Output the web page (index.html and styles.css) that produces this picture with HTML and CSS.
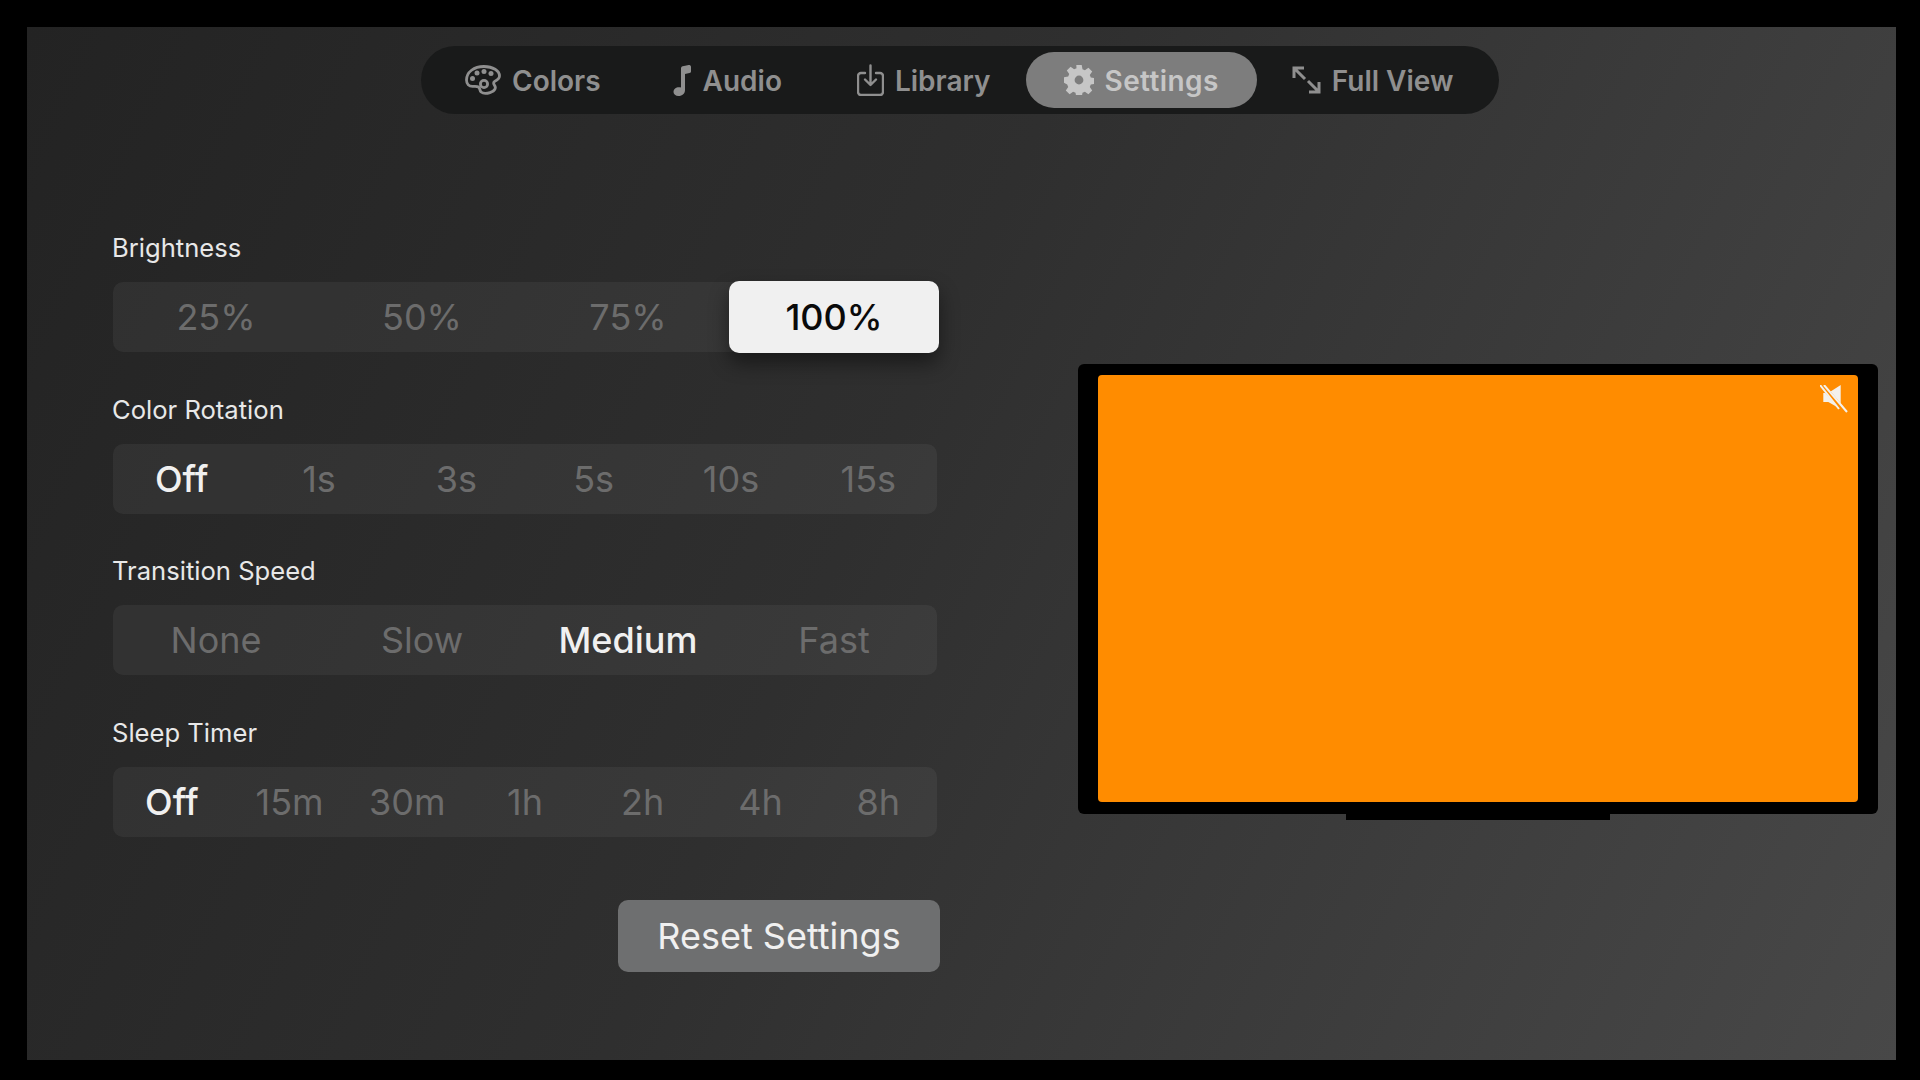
FILE: index.html
```html
<!DOCTYPE html>
<html>
<head>
    <link rel="stylesheet" href="styles.css">
</head>
<body>
    <div class="screen">
        <div class="tab-bar">
            <div class="tab">
                <svg class="tab-icon" width="36" height="30" viewBox="0 0 36 30" fill="none" stroke="currentColor" stroke-width="2.800">
                    <path d="M19 1.500C9 1.500 1.500 7 1.500 15c0 4 2.600 6.400 6 6.400 2.600 0 4.600-.4 6 .6 1.800 1.300 1 3.600 2.600 5 1.800 1.500 5.400 1.700 8.900.6 5.500-1.700 6.200-5 4.500-7.300-1.200-1.700-1.300-3.100.4-4 2.500-1.300 4.600-2.600 4.600-5.300C34.500 5.600 28 1.500 19 1.500z"/>
                    <circle cx="19" cy="19" r="3.600"/>
                    <g fill="currentColor" stroke="none">
                        <circle cx="7.500" cy="13.500" r="2.500"/>
                        <circle cx="12" cy="8" r="2.500"/>
                        <circle cx="19" cy="6.500" r="2.500"/>
                        <circle cx="26" cy="8.500" r="2.500"/>
                    </g>
                </svg>
                <span>Colors</span>
            </div>
            <div class="tab tab-audio">
                <svg class="tab-icon" width="20" height="31" viewBox="0 0 20 31" fill="currentColor">
                    <path d="M9 3.500c0-1.200.6-1.900 1.700-2.200l6-1.300C18 -.2 19 .6 19 2v4.200c0 1-.5 1.600-1.500 1.800l-4.500 1v16c0 3.500-2.700 6-6.500 6C3.500 31 1.500 29.300 1.500 27c0-2.800 2.400-4.700 5.500-4.700.8 0 1.500.1 2 .3z"/>
                </svg>
                <span>Audio</span>
            </div>
            <div class="tab">
                <svg class="tab-icon" width="27" height="32" viewBox="0 0 27 32" fill="none" stroke="currentColor" stroke-width="2.400" stroke-linecap="round" stroke-linejoin="round">
                    <path d="M8 9H4a3 3 0 0 0-3 3v16a3 3 0 0 0 3 3h19a3 3 0 0 0 3-3V12a3 3 0 0 0-3-3h-4"/>
                    <path d="M13.500 1.500v19M8 15.500l5.500 5.500 5.500-5.500"/>
                </svg>
                <span>Library</span>
            </div>
            <div class="tab active">
                <svg class="tab-icon" width="30" height="30" viewBox="0 0 30 30" fill="currentColor">
                    <path fill-rule="evenodd" d="M12.300 0h5.400l.8 4.200 2.400 1 3.500-2.400 3.800 3.800-2.400 3.500 1 2.400 4.200.8v5.400l-4.200.8-1 2.400 2.400 3.500-3.800 3.800-3.500-2.400-2.400 1-.8 4.200h-5.400l-.8-4.200-2.400-1-3.500 2.400-3.800-3.800 2.400-3.500-1-2.400L0 17.700v-5.400l4.200-.8 1-2.400-2.400-3.500 3.800-3.800 3.500 2.400 2.400-1zM15 10.600a4.400 4.400 0 1 0 0 8.800 4.400 4.400 0 0 0 0-8.800z"/>
                </svg>
                <span>Settings</span>
            </div>
            <div class="tab">
                <svg class="tab-icon" width="29" height="28" viewBox="0 0 29 28" fill="none" stroke="currentColor" stroke-width="3">
                    <path d="M2 12V2h10M2 2l11 11M27 16v10H17M27 26L16 15"/>
                </svg>
                <span>Full View</span>
            </div>
        </div>

        <div class="main">
            <div class="settings">
                <div class="group">
                    <div class="group-label">Brightness</div>
                    <div class="segments">
                        <div class="segment">25%</div>
                        <div class="segment">50%</div>
                        <div class="segment">75%</div>
                        <div class="segment selected">100%</div>
                    </div>
                </div>
                <div class="group">
                    <div class="group-label">Color Rotation</div>
                    <div class="segments">
                        <div class="segment on">Off</div>
                        <div class="segment">1s</div>
                        <div class="segment">3s</div>
                        <div class="segment">5s</div>
                        <div class="segment">10s</div>
                        <div class="segment">15s</div>
                    </div>
                </div>
                <div class="group">
                    <div class="group-label">Transition Speed</div>
                    <div class="segments">
                        <div class="segment">None</div>
                        <div class="segment">Slow</div>
                        <div class="segment on">Medium</div>
                        <div class="segment">Fast</div>
                    </div>
                </div>
                <div class="group">
                    <div class="group-label">Sleep Timer</div>
                    <div class="segments">
                        <div class="segment on">Off</div>
                        <div class="segment">15m</div>
                        <div class="segment">30m</div>
                        <div class="segment">1h</div>
                        <div class="segment">2h</div>
                        <div class="segment">4h</div>
                        <div class="segment">8h</div>
                    </div>
                </div>
                <button class="reset-btn">Reset Settings</button>
            </div>

            <div class="preview">
                <div class="tv-frame">
                    <div class="tv-picture">
                        <svg class="mute-icon" width="28" height="28" viewBox="0 0 28 28">
                            <path fill="#f4f1ec" d="M3.300 8h5L20.700 0v24L8.300 17h-5z"/>
                            <path stroke="#ff8c00" stroke-width="5" d="M1 -1l23 27"/>
                            <path stroke="#f4f1ec" stroke-width="2" d="M0 0l19 24M4 0l23 27"/>
                        </svg>
                    </div>
                </div>
                <div class="tv-stand"></div>
            </div>
        </div>
    </div>
</body>
</html>
```

FILE: styles.css
```css
html, body {
    margin: 0;
    height: 100%;
    background-color: #000;
    overflow: hidden;
}
body {
    font-family: 'Inter', 'Liberation Sans', sans-serif;
    padding: 27px 24px 20px 27px;
    box-sizing: border-box;
}
.screen {
    height: 100%;
    padding: 19px 18px 0 86px;
    box-sizing: border-box;
    background: linear-gradient(115deg, #232323 0%, #2f2f2f 45%, #484848 100%);
}
.tab-bar {
    width: 1078px;
    height: 68px;
    margin-left: 308px;
    padding: 6px 9px;
    box-sizing: border-box;
    display: flex;
    border-radius: 34px;
    background-color: #191a1a;
}
.tab {
    display: flex;
    align-items: center;
    gap: 11px;
    margin-left: -3px;
    padding: 0 38px;
    border-radius: 28px;
    font-size: 28px;
    font-weight: 600;
    white-space: nowrap;
    color: #8f8f8f;
}
.tab span {
    margin-top: 1px;
}
.tab.active {
    background-color: #7d7d7d;
    color: #c6c6c6;
    letter-spacing: 0.4px;
}
.tab-audio {
    margin-left: -5px;
    margin-right: 2px;
}
.tab-icon {
    flex-shrink: 0;
}
.main {
    display: flex;
    justify-content: space-between;
    margin-top: 118px;
}
.settings {
    width: 827px;
    display: flex;
    flex-direction: column;
}
.group {
    margin-bottom: 41.600px;
}
.group-label {
    height: 32px;
    line-height: 32px;
    margin-bottom: 18px;
    margin-left: -1px;
    font-size: 25.600px;
    font-weight: 400;
    color: #e8e8e8;
}
.segments {
    width: 824px;
    height: 70px;
    display: flex;
    border-radius: 10px;
    background-color: rgba(255,255,255,0.05);
}
.segment {
    flex: 1;
    display: flex;
    align-items: center;
    justify-content: center;
    font-size: 36px;
    color: #6c6c6c;
}
.segment.on {
    font-weight: 500;
    color: #f0f0f0;
}
.segment.selected {
    flex: none;
    width: 210px;
    margin: -1px -2px;
    border-radius: 10px;
    background-color: #f0f0f0;
    color: #0a0a0a;
    font-weight: 500;
    box-shadow: 0 10px 20px rgba(0,0,0,0.45);
}
.reset-btn {
    align-self: flex-end;
    width: 322px;
    height: 72px;
    margin-top: 21.400px;
    border: none;
    border-radius: 10px;
    background-color: #6e6f70;
    font-family: inherit;
    font-size: 36px;
    font-weight: 400;
    color: #f0f0f0;
}
.preview {
    width: 800px;
    margin-top: 132px;
}
.tv-frame {
    height: 450px;
    padding: 11px 20px 12px;
    box-sizing: border-box;
    border-radius: 6px;
    background-color: #000;
}
.tv-picture {
    position: relative;
    height: 100%;
    border-radius: 4px;
    background-color: #ff8c00;
}
.mute-icon {
    position: absolute;
    top: 10px;
    right: 10px;
}
.tv-stand {
    width: 264px;
    height: 6px;
    margin-left: 268px;
    background-color: #000;
}
```
